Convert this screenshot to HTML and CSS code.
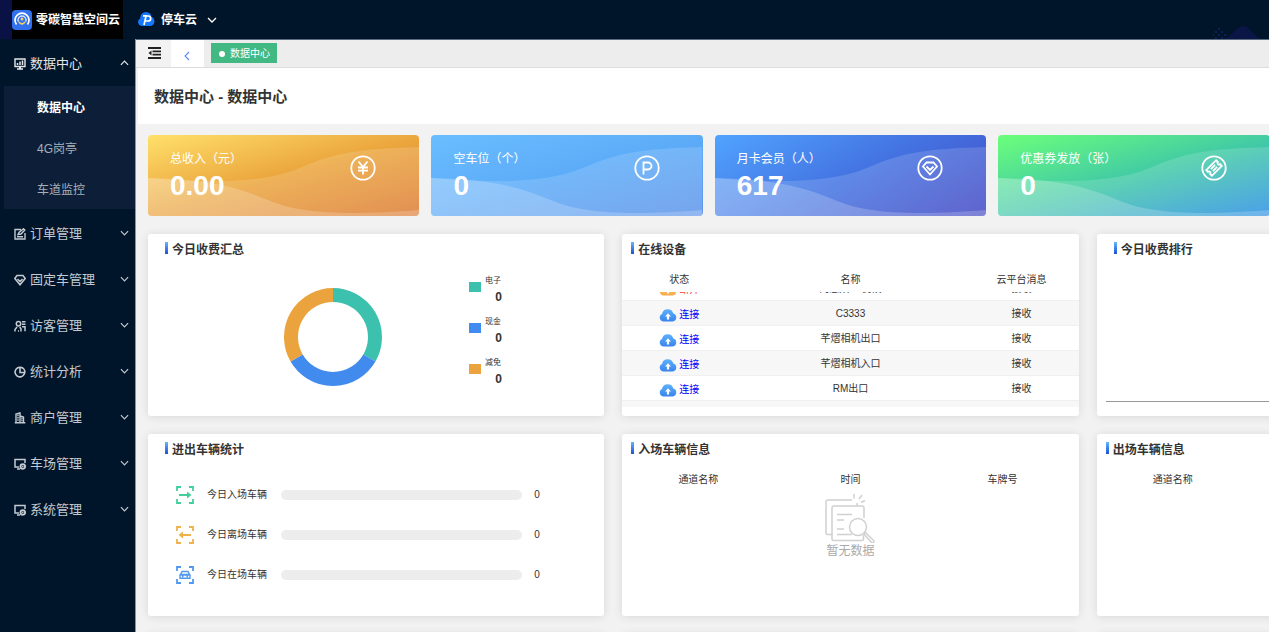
FILE: index.html
```html
<!DOCTYPE html>
<html lang="zh-CN">
<head>
<meta charset="utf-8">
<title>数据中心</title>
<link rel="stylesheet" href="styles.css">
</head>
<body>
<svg class="defs" width="0" height="0" aria-hidden="true">
  <defs>
    <linearGradient id="g-blue" x1="0" y1="0" x2="0" y2="1"><stop offset="0" stop-color="#5db2fb"/><stop offset="1" stop-color="#3a84ee"/></linearGradient>
    <linearGradient id="g-orange" x1="0" y1="0" x2="0" y2="1"><stop offset="0" stop-color="#ffd466"/><stop offset="1" stop-color="#f6a94a"/></linearGradient>
    <symbol id="down" viewBox="0 0 10 6"><path d="M1 1l4 4 4-4" fill="none" stroke="currentColor" stroke-width="1.300"/></symbol>
    <symbol id="cloud" viewBox="0 0 18 13"><path d="M4.500 12.500A4 4 0 0 1 3 4.900a5.800 5.800 0 0 1 11.300-.4A4.100 4.100 0 0 1 13.700 12.500z"/><path d="M9 4.200l3 3.300h-1.900v3H7.900v-3H6z" fill="#fff"/></symbol>
    <symbol id="waves" viewBox="0 0 272 81" preserveAspectRatio="none">
      <path d="M0 43C50 47 112 50 152 33C190 17 210 14 272 12V81H0z" fill="#fff" fill-opacity=".15"/>
      <path d="M0 43C55 44 88 51 120 65C150 78 195 81 272 75V81H0z" fill="#fff" fill-opacity=".2"/>
    </symbol>
    <symbol id="corners" viewBox="0 0 18 18"><path d="M1 5V1h4M13 1h4v4M17 13v4h-4M5 17H1v-4" fill="none" stroke="currentColor" stroke-width="1.800"/></symbol>
    <symbol id="monitor-gear" viewBox="0 0 12 12"><path d="M5 9H1V1.500h10V5M3 11h3" fill="none" stroke="currentColor" stroke-width="1.500"/><circle cx="8.800" cy="8.500" r="2.300" fill="none" stroke="currentColor" stroke-width="1.900"/><circle cx="8.800" cy="8.500" r=".8" fill="currentColor"/></symbol>
  </defs>
</svg>

<header class="top">
  <div class="brand">
    <svg width="20" height="20" viewBox="0 0 20 20" aria-hidden="true">
      <rect width="20" height="20" rx="4" fill="#3271ee"/>
      <path d="M4.500 14.500a7 7 0 1 1 11 0" fill="none" stroke="#fff" stroke-width="1.700"/>
      <path d="M6.300 11.500a4 4 0 1 1 7.400 0" fill="none" stroke="#dbe8ff" stroke-width="1.300"/>
      <path d="M6 11c1.500 5 6.500 5 8 0l-2 1a2.500 2.500 0 0 1-4 0z" fill="#f3cf62"/><circle cx="10" cy="9" r="1.500" fill="#f3cf62"/>
    </svg>
    <span>零碳智慧空间云</span>
  </div>
  <button class="product" type="button">
    <svg width="17" height="15" viewBox="0 0 17 15" aria-hidden="true">
      <path d="M3.500 14A4 4 0 0 1 2.200 6.500 6 6 0 0 1 12.900 4.500 5 5 0 0 1 13 14z" fill="#1677ff"/><circle cx="8" cy="5.500" r="5.500" fill="#1677ff"/>
      <path d="M6 13l2-9h2.200a2.500 2.500 0 0 1 0 5H7.500M5 3.800h4" fill="none" stroke="#fff" stroke-width="1.700"/>
    </svg>
    <span>停车云</span>
    <svg width="10" height="6" aria-hidden="true"><use href="#down"/></svg>
  </button>
  <svg class="deco" width="56" height="14" viewBox="0 0 56 14" aria-hidden="true">
    <path d="M10 14C20 12 23 1 30 1S41 12 48 14z" fill="#0b1647"/>
    <g fill="#0d2055"><path d="M5 3h2v2H5zM2 6h2v2H2zM8 6h2v2H8zM0 9h1v2H0zM5 9h2v2H5zM11 9h2v2h-2zM2 12h2v2H2zM8 12h2v2H8z"/></g>
  </svg>
</header>

<div class="body">
  <nav class="side">
    <button class="group open" type="button">
      <svg width="12" height="12" viewBox="0 0 12 12" aria-hidden="true"><path d="M1 1h10v7.500H1zM3 11h6" fill="none" stroke="currentColor" stroke-width="1.400"/><path d="M3.500 7V5M6 7V3.500M8.500 7V2.500" stroke="currentColor" stroke-width="1.500"/><path d="M5 8.500h2V11H5z" fill="currentColor"/></svg>
      <span>数据中心</span><svg class="arrow" width="9" height="6" aria-hidden="true"><use href="#down"/></svg>
    </button>
    <div class="sub">
      <a href="#" class="current">数据中心</a>
      <a href="#">4G岗亭</a>
      <a href="#">车道监控</a>
    </div>
    <button class="group" type="button">
      <svg width="12" height="12" viewBox="0 0 12 12" aria-hidden="true"><path d="M7 1.500H1v9.500h10V5M3 8.800h6M4 6.500l1-2L9.500.8l1.300 1.300L7 6z" fill="none" stroke="currentColor" stroke-width="1.400"/></svg>
      <span>订单管理</span><svg class="arrow" width="9" height="6" aria-hidden="true"><use href="#down"/></svg>
    </button>
    <button class="group" type="button">
      <svg width="12" height="12" viewBox="0 0 12 12" aria-hidden="true"><path d="M3 1.500h6l2.200 3L6 10.800.8 4.500zM3.500 5L6 7.500 8.500 5" fill="none" stroke="currentColor" stroke-width="1.500"/></svg>
      <span>固定车管理</span><svg class="arrow" width="9" height="6" aria-hidden="true"><use href="#down"/></svg>
    </button>
    <button class="group" type="button">
      <svg width="12" height="12" viewBox="0 0 12 12" aria-hidden="true"><circle cx="4.500" cy="3.800" r="2.200" fill="none" stroke="currentColor" stroke-width="1.500"/><path d="M1 11.500V9.500L3 7M4 11h1M7 11.500V9L5.800 7M8 1.800h3.500M8 4.300h3.500M8 6.800h3v4.500" fill="none" stroke="currentColor" stroke-width="1.500"/></svg>
      <span>访客管理</span><svg class="arrow" width="9" height="6" aria-hidden="true"><use href="#down"/></svg>
    </button>
    <button class="group" type="button">
      <svg width="12" height="12" viewBox="0 0 12 12" aria-hidden="true"><path d="M7.500 1.500A4.800 4.800 0 1 0 10.600 7M6 2v4.500h4.800A4.600 4.600 0 0 0 7 1.400" fill="none" stroke="currentColor" stroke-width="1.600"/></svg>
      <span>统计分析</span><svg class="arrow" width="9" height="6" aria-hidden="true"><use href="#down"/></svg>
    </button>
    <button class="group" type="button">
      <svg width="12" height="12" viewBox="0 0 12 12" aria-hidden="true"><path d="M2 10.500V2l4-1v9.500M.8 10.800h10.500M6 4l3.500 1v5.500M3.300 3.500h1.400M3.300 5.800h1.400M3.300 8h1.400M7.300 6.500h1.200M7.300 8.500h1.200" fill="none" stroke="currentColor" stroke-width="1.400"/></svg>
      <span>商户管理</span><svg class="arrow" width="9" height="6" aria-hidden="true"><use href="#down"/></svg>
    </button>
    <button class="group" type="button">
      <svg width="12" height="12" aria-hidden="true"><use href="#monitor-gear"/></svg>
      <span>车场管理</span><svg class="arrow" width="9" height="6" aria-hidden="true"><use href="#down"/></svg>
    </button>
    <button class="group" type="button">
      <svg width="12" height="12" aria-hidden="true"><use href="#monitor-gear"/></svg>
      <span>系统管理</span><svg class="arrow" width="9" height="6" aria-hidden="true"><use href="#down"/></svg>
    </button>
  </nav>

  <main class="main">
    <div class="tabs">
      <button class="fold" type="button" aria-label="折叠菜单"><svg width="13" height="12" viewBox="0 0 13 12" aria-hidden="true"><path d="M0 1h13M4.500 4.300H13M4.500 7.600H13M0 11h13" stroke="#222" stroke-width="1.800"/><path d="M3.500 3.500v5L.5 6z" fill="#222"/></svg></button>
      <button class="back" type="button" aria-label="向左"><svg width="6" height="10" viewBox="0 0 6 10" aria-hidden="true"><path d="M5 1L1 5l4 4" fill="none" stroke="#5b8af5" stroke-width="1.100"/></svg></button>
      <a class="tab" href="#">数据中心</a>
    </div>
    <h1 class="title">数据中心 - 数据中心</h1>

    <div class="board">
      <section class="stats">
        <article class="stat gold">
          <svg class="waves" aria-hidden="true"><use href="#waves"/></svg>
          <div class="figure"><p>总收入（元）</p><strong>0.00</strong></div>
          <svg class="badge" width="26" height="26" viewBox="0 0 26 26" aria-hidden="true"><circle cx="13" cy="13" r="11.700"/><path d="M8.500 6.500L13 12l4.500-5.500M13 12v7.500M8 12.500h10M8 15.700h10"/></svg>
        </article>
        <article class="stat sky">
          <svg class="waves" aria-hidden="true"><use href="#waves"/></svg>
          <div class="figure"><p>空车位（个）</p><strong>0</strong></div>
          <svg class="badge" width="26" height="26" viewBox="0 0 26 26" aria-hidden="true"><circle cx="13" cy="13" r="11.700"/><path d="M9.500 19.500v-12H14a3.500 3.500 0 0 1 0 7H9.500"/></svg>
        </article>
        <article class="stat indigo">
          <svg class="waves" aria-hidden="true"><use href="#waves"/></svg>
          <div class="figure"><p>月卡会员（人）</p><strong>617</strong></div>
          <svg class="badge" width="26" height="26" viewBox="0 0 26 26" aria-hidden="true"><circle cx="13" cy="13" r="11.700"/><path d="M9.500 7.500h7l3.500 4-7 8-7-8zM9.500 11.500l3.500 3.500 3.500-3.500"/></svg>
        </article>
        <article class="stat green">
          <svg class="waves" aria-hidden="true"><use href="#waves"/></svg>
          <div class="figure"><p>优惠券发放（张）</p><strong>0</strong></div>
          <svg class="badge" width="26" height="26" viewBox="0 0 26 26" aria-hidden="true"><circle cx="13" cy="13" r="11.700"/><g transform="rotate(-45 13 13)"><path d="M6 9h14v2.500a1.500 1.500 0 0 0 0 3V17H6v-2.500a1.500 1.500 0 0 0 0-3zM10 11.600h6M10 14.400h6"/></g></svg>
        </article>
      </section>

      <section class="panels">
        <article class="panel">
          <h2 class="inset">今日收费汇总</h2>
          <div class="income">
            <svg width="98" height="98" viewBox="-49 -49 98 98" fill="none" stroke-width="14" role="img" aria-label="今日收费汇总">
              <path d="M0-42A42 42 0 0 1 36.370 21" stroke="#3cc1ae"/><path d="M36.370 21A42 42 0 0 1-36.370 21" stroke="#418aee"/><path d="M-36.370 21A42 42 0 0 1 0-42" stroke="#eba33d"/>
            </svg>
            <dl class="legend">
              <div class="teal"><dt>电子</dt><dd>0</dd></div>
              <div class="blue"><dt>现金</dt><dd>0</dd></div>
              <div class="amber"><dt>减免</dt><dd>0</dd></div>
            </dl>
          </div>
        </article>

        <article class="panel">
          <h2>在线设备</h2>
          <div class="heads device"><span>状态</span><span>名称</span><span>云平台消息</span></div>
          <div class="scroller">
            <table class="rows">
              <colgroup><col class="narrow"><col><col class="narrow"></colgroup>
              <tbody>
              <tr><td><span class="state off"><svg width="18" height="13" fill="url(#g-orange)" aria-hidden="true"><use href="#cloud"/></svg>断开</span></td><td>阿志双AI 优候</td><td>接收</td></tr>
              <tr><td><span class="state"><svg width="18" height="13" fill="url(#g-blue)" aria-hidden="true"><use href="#cloud"/></svg>连接</span></td><td>C3333</td><td>接收</td></tr>
              <tr><td><span class="state"><svg width="18" height="13" fill="url(#g-blue)" aria-hidden="true"><use href="#cloud"/></svg>连接</span></td><td>芊熠相机出口</td><td>接收</td></tr>
              <tr><td><span class="state"><svg width="18" height="13" fill="url(#g-blue)" aria-hidden="true"><use href="#cloud"/></svg>连接</span></td><td>芊熠相机入口</td><td>接收</td></tr>
              <tr><td><span class="state"><svg width="18" height="13" fill="url(#g-blue)" aria-hidden="true"><use href="#cloud"/></svg>连接</span></td><td>RM出口</td><td>接收</td></tr>
              <tr><td></td><td></td><td></td></tr>
              </tbody>
            </table>
          </div>
        </article>

        <article class="panel">
          <h2 class="inset">今日收费排行</h2>
          <div class="axis"></div>
        </article>

        <article class="panel">
          <h2 class="inset">进出车辆统计</h2>
          <ul class="flow">
            <li class="in"><svg width="18" height="18" viewBox="0 0 18 18" aria-hidden="true"><use href="#corners"/><path d="M3 9h9" stroke="currentColor" stroke-width="1.800"/><path d="M11 5.500L15.500 9 11 12.500z" fill="currentColor"/></svg><span class="name">今日入场车辆</span><span class="bar"></span><b>0</b></li>
            <li class="out"><svg width="18" height="18" viewBox="0 0 18 18" aria-hidden="true"><use href="#corners"/><path d="M15 9H6" stroke="currentColor" stroke-width="1.800"/><path d="M7 5.500L2.500 9 7 12.500z" fill="currentColor"/></svg><span class="name">今日离场车辆</span><span class="bar"></span><b>0</b></li>
            <li class="stay"><svg width="18" height="18" viewBox="0 0 18 18" aria-hidden="true"><use href="#corners"/><path d="M4.500 8.500L6 5.500h6l1.500 3zM4 13V9h10v4M4.500 12.300h9M6 10.500h1.500M10.500 10.500H12" fill="none" stroke="currentColor" stroke-width="1.400"/></svg><span class="name">今日在场车辆</span><span class="bar"></span><b>0</b></li>
          </ul>
        </article>

        <article class="panel">
          <h2>入场车辆信息</h2>
          <div class="heads"><span>通道名称</span><span>时间</span><span>车牌号</span></div>
          <div class="empty">
            <svg width="50" height="50" viewBox="0 0 50 50" fill="none" stroke="#d0d0d0" stroke-width="1.500" aria-hidden="true">
              <path d="M27 7H3a2 2 0 0 0-2 2v31a1.500 1.500 0 0 0 1.500 1.500H7"/>
              <path d="M39 25V15a2 2 0 0 0-2-2H9a2 2 0 0 0-2 2v31a1.500 1.500 0 0 0 1.500 1.500H37a1.500 1.500 0 0 0 1.500-1.500v-4M12 21.500h15M12 27h7M12 36h7M12 41.500h15M29 1v4.500M37 2l-3 4M40 7.500l-4 2M32 10v3"/>
              <circle cx="33" cy="34" r="8.500"/><path d="M39 41l1.500-1.500 8 8a1 1 0 0 1-2 2z"/>
            </svg>
            <p>暂无数据</p>
          </div>
        </article>

        <article class="panel">
          <h2>出场车辆信息</h2>
          <div class="heads"><span>通道名称</span></div>
        </article>

        <article class="panel"></article>
        <article class="panel"></article>
        <article class="panel"></article>
      </section>
    </div>
  </main>
</div>
</body>
</html>
```
FILE: styles.css
```css
* { box-sizing: border-box; }
body {
  margin: 0;
  height: 100vh;
  display: flex;
  flex-direction: column;
  overflow: hidden;
  font: 10px/16px "Liberation Sans", "Noto Sans CJK SC", sans-serif;
  color: #333;
  background: #f2f2f2;
}
h1, h2, p, dl, dd, ul { margin: 0; padding: 0; }
button { border: 0; padding: 0; background: none; font: inherit; color: inherit; cursor: pointer; }
a { color: inherit; text-decoration: none; }
svg { display: block; flex: none; }
.defs { position: absolute; }

.top {
  flex: none;
  height: 40px;
  display: flex;
  background: #001529;
  border-bottom: 1px solid #5b6a7c;
}
.brand {
  display: flex;
  align-items: center;
  gap: 4px;
  border-left: 12px solid #0a1145;
  background: #000;
  color: #fff;
  font-size: 12px;
  font-weight: bold;
  white-space: nowrap;
  padding: 1px 3px 0 0;
}
.product { display: flex; align-items: center; gap: 6px; margin-left: 15px; color: #fff; font-size: 12px; font-weight: bold; }
.product svg:last-child { margin-left: 4px; }
.deco { margin-left: auto; align-self: flex-end; }

.body { flex: 1; display: flex; min-height: 0; }
.side { flex: none; width: 136px; background: #001529; border-right: 1px solid #8c959e; margin-top: -1px; padding-top: 1px; }
.group {
  width: 100%;
  height: 46px;
  display: flex;
  align-items: center;
  gap: 4px;
  padding: 2px 6px 0 14px;
  font-size: 13px;
  color: #c3cad1;
}
.group.open { color: #e3e7ea; }
.arrow { margin: 0 0 3px auto; }
.open .arrow { transform: rotate(180deg); }
.sub { margin: 0 0 1px 4px; background: #0d1f38; display: grid; grid-auto-rows: 41px; }
.sub a { padding: 2px 0 0 33px; line-height: 41px; font-size: 12px; color: #a6b0bb; }
.sub .current { color: #fff; font-weight: bold; }

.main { flex: 1; min-width: 0; overflow: hidden; }
.tabs { height: 28px; display: flex; background: #ededed; border-bottom: 1px solid #dcdcdc; }
.fold { width: 35px; padding: 0 0 1px 12px; background: #f2f2f2; }
.back { width: 33px; display: grid; place-items: center; padding: 4px 2px 0 0; background: #fff; }
.tab {
  align-self: flex-start;
  display: flex;
  align-items: center;
  gap: 5px;
  margin: 3px 0 0 7px;
  padding: 3px 7px 1px 8px;
  background: #42b983;
  color: #fff;
}
.tab::before { content: ""; width: 6px; height: 6px; border-radius: 50%; background: #fff; }
.title { margin-left: 2px; padding: 1px 16px 0; background: #fff; font-size: 15px; line-height: 55px; }

.board { min-width: 1405px; width: 100%; padding: 11px 0 0 12px; }
.stats, .panels { width: 1405px; min-width: 100%; display: grid; }
.stats { grid-template-columns: repeat(5, 1fr); gap: 12px; }
.stat {
  position: relative;
  height: 81px;
  display: flex;
  justify-content: space-between;
  padding: 15px 43px 0 22px;
  border-radius: 4px;
  overflow: hidden;
  color: #fff;
}
.waves { position: absolute; inset: 0; width: 100%; height: 100%; }
.figure { position: relative; }
.stat p { font-size: 12px; line-height: 18px; }
.stat strong { display: block; font-size: 28px; line-height: 36px; }
.badge { position: relative; margin-top: 5px; fill: none; stroke: #fff; stroke-width: 1.8; }
.gold { background: linear-gradient(165deg, #ffe06b, #eba53c 50%, #dd7c35); }
.sky { background: linear-gradient(165deg, #6abeff, #5cabf8 50%, #5e94ea); }
.indigo { background: linear-gradient(150deg, #50a3ff, #4474e2 50%, #4348c4); }
.green { background: linear-gradient(165deg, #6cff7a, #42cba5 50%, #2b8fe6); }

.panels { grid-template-columns: repeat(3, 1fr); grid-auto-rows: 182px; gap: 18px; padding-top: 18px; }
.panel { background: #fff; border-radius: 3px; box-shadow: 0 1px 10px #0000001c; overflow: hidden; padding-top: 8px; }
.panel h2 { display: flex; gap: 4px; padding-left: 9px; font-size: 12px; line-height: 17px; }
.panel h2.inset { padding-left: 17px; }
.panel h2::before { content: ""; width: 3px; height: 12px; background: linear-gradient(#62b6fb, #1d51d8); }

.income { display: flex; align-items: flex-start; gap: 87px; padding: 13px 0 0 136px; }
.income > svg { margin-top: 16px; }
.legend { display: grid; gap: 8px; }
.legend div { display: grid; grid-template-columns: 12px 17px; column-gap: 4px; font-size: 8px; line-height: 16px; }
.legend div::before { content: ""; grid-row: 1 / 3; width: 12px; height: 10px; margin-top: 10px; background: currentColor; }
.legend dt { padding-top: 1px; color: #333; }
.legend dd { grid-column: 2; color: #333; font-size: 12px; font-weight: bold; text-align: right; }
.teal { color: #3cc1ae; }
.blue { color: #418aee; }
.amber { color: #eba33d; }

.heads { display: grid; grid-template-columns: repeat(3, 1fr); text-align: center; margin-top: 13px; }
.heads.device { grid-template-columns: 1fr 2fr 1fr; }
.scroller { height: 115px; margin-top: 4px; overflow: hidden; }
.rows { width: 100%; margin-top: -17px; table-layout: fixed; border-collapse: collapse; text-align: center; }
.narrow { width: 25%; }
.rows td { height: 25px; padding: 3px 0 0; border-bottom: 1px solid #f0f0f0; }
.rows tr:nth-child(even) { background: #f7f7f7; }
.state { display: flex; align-items: center; justify-content: center; gap: 2px; padding-top: 2px; color: #00f; }
.state.off { color: #f33; }

.axis { margin: 142px 0 0 9px; border-top: 1px solid #999; }

.flow { list-style: none; display: grid; gap: 22px; padding: 27px 70px 0 28px; }
.flow li { display: flex; align-items: center; height: 18px; }
.flow .name { margin: 0 14px 0 13px; }
.bar { flex: 1; height: 10px; border-radius: 5px; background: #ededed; }
.flow b { width: 6px; margin: 0 -6px 0 12px; font-weight: normal; }
.in { color: #43cf9b; }
.out { color: #efb14b; }
.stay { color: #5099ef; }
.flow .name, .flow b { color: #333; }

.empty { display: grid; justify-items: center; padding-top: 5px; color: #aaa; font-size: 12px; }
```
